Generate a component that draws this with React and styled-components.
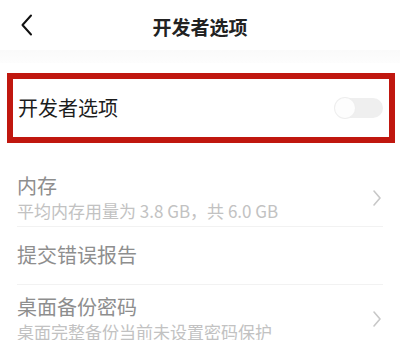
import React from 'react';
import styled, { createGlobalStyle } from 'styled-components';

const GlobalStyle = createGlobalStyle`
  html, body {
    margin: 0;
    padding: 0;
    background: #ffffff;
  }
  body {
    font-family: "Noto Sans CJK SC", "Noto Sans", sans-serif;
    -webkit-font-smoothing: antialiased;
  }
`;

const Page = styled.div`
  width: 400px;
  height: 340px;
  overflow: hidden;
  background: #ffffff;
`;

const Header = styled.div`
  display: grid;
  grid-template-columns: 56px 1fr 56px;
  align-items: center;
  height: 50px;
`;

const BackButton = styled.div`
  display: flex;
  align-items: center;
  justify-content: flex-start;
  padding-left: 20px;
  height: 100%;
`;

const Title = styled.div`
  text-align: center;
  font-size: 19px;
  font-weight: 700;
  color: #222222;
  line-height: 26px;
  margin-top: 4px;
`;

const HeaderShade = styled.div`
  height: 13px;
  background: linear-gradient(#fafafa, #fdfdfd);
`;

const Highlight = styled.div`
  margin: 10px 5px 0 7px;
  border: 6px solid #c0170f;
  height: 58px;
  display: flex;
  align-items: center;
  justify-content: space-between;
  padding: 0 6px 0 5px;
`;

const MainLabel = styled.div`
  font-size: 20px;
  line-height: 26px;
  color: #1c1c1c;
`;

const Switch = styled.div`
  position: relative;
  width: 48px;
  height: 20px;
  border-radius: 10px;
  background: #efefef;
`;

const Knob = styled.div`
  position: absolute;
  left: 0;
  top: 0;
  width: 20px;
  height: 20px;
  border-radius: 50%;
  background: #fdfdfd;
  box-shadow: 0 0 0 1px #eeeeee;
`;

const List = styled.div`
  padding-top: 21px;
`;

const Item = styled.div`
  padding: 0 17px;
`;

const ItemInner = styled.div`
  display: flex;
  align-items: center;
  justify-content: space-between;
  padding: ${(p) => (p.$sub ? '9px 0 4px' : '15px 0 16px')};
  border-bottom: ${(p) => (p.$last ? 'none' : '1px solid #f2f2f2')};
`;

const ItemText = styled.div`
  display: flex;
  flex-direction: column;
`;

const ItemLabel = styled.div`
  font-size: 20px;
  line-height: 26px;
  color: #8e8e8e;
`;

const ItemSub = styled.div`
  font-size: 17px;
  line-height: 22px;
  margin-top: 1px;
  color: #c2c2c2;
  white-space: nowrap;
`;

const Arrow = styled.svg`
  width: 10px;
  height: 20px;
  margin-right: 1px;
  flex-shrink: 0;
`;

const items = [
  { label: '内存', sub: '平均内存用量为 3.8 GB，共 6.0 GB', arrow: true },
  { label: '提交错误报告', sub: null, arrow: false },
  { label: '桌面备份密码', sub: '桌面完整备份当前未设置密码保护', arrow: true },
];

const App = () => (
  <Page>
    <GlobalStyle />
    <Header>
      <BackButton>
        <svg width="14" height="22" viewBox="0 0 14 22">
          <path d="M11 1.5 L2.5 11 L11 20.5" fill="none" stroke="#111" strokeWidth="2" strokeLinecap="round" strokeLinejoin="round" />
        </svg>
      </BackButton>
      <Title>开发者选项</Title>
      <div />
    </Header>
    <HeaderShade />
    <Highlight>
      <MainLabel>开发者选项</MainLabel>
      <Switch>
        <Knob />
      </Switch>
    </Highlight>
    <List>
      {items.map((item, i) => (
        <Item key={item.label}>
          <ItemInner $sub={!!item.sub} $last={i === items.length - 1}>
            <ItemText>
              <ItemLabel>{item.label}</ItemLabel>
              {item.sub && <ItemSub>{item.sub}</ItemSub>}
            </ItemText>
            {item.arrow && (
              <Arrow viewBox="0 0 10 20">
                <path d="M2 3 L8 10 L2 17" fill="none" stroke="#c8c8c8" strokeWidth="1.6" strokeLinecap="round" strokeLinejoin="round" />
              </Arrow>
            )}
          </ItemInner>
        </Item>
      ))}
    </List>
  </Page>
);

export default App;
